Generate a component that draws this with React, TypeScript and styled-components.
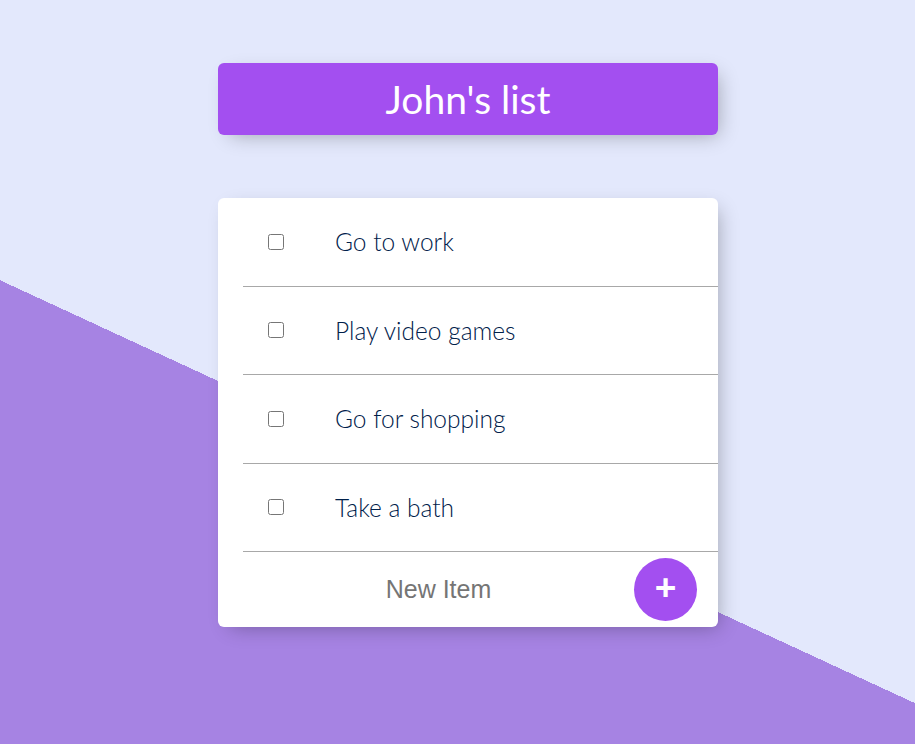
import React from "react";
import styled, { createGlobalStyle } from "styled-components";

const Global = createGlobalStyle`
  html, body { margin: 0; padding: 0; }
  body { font-family: "Lato", "Liberation Sans", sans-serif; }
`;

const Page = styled.div`
  min-height: 744px;
  box-sizing: border-box;
  padding-top: 63px;
  padding-left: 21px;
  display: flex;
  flex-direction: column;
  align-items: center;
  gap: 63px;
  background-color: #e3e8fc;
  background-image: linear-gradient(24.81deg, #a683e3 421px, #e3e8fc 421px);
`;

const Box = styled.div`
  width: 500px;
  background: #ffffff;
  border-radius: 6px;
  box-shadow: 6px 6px 19px -6px rgba(0, 0, 0, 0.3);
`;

const HeadingBox = styled(Box)`
  background: #a34ff0;
`;

const Title = styled.h1`
  margin: 0;
  height: 72px;
  display: flex;
  align-items: center;
  justify-content: center;
  color: #ffffff;
  font-family: "Lato", sans-serif;
  font-weight: 400;
  font-size: 39px;
`;

const Item = styled.div`
  margin-left: 25px;
  height: 87.5px;
  display: flex;
  align-items: center;
  border-bottom: 1px solid #a8a8a8;
`;

const Check = styled.input`
  width: 16px;
  height: 16px;
  margin: 0 26px 0 25px;
  flex: none;
`;

const Label = styled.p`
  margin: 0;
  padding: 0 25px;
  font-family: "Lato", sans-serif;
  font-size: 24.5px;
  font-weight: 300;
  color: #00204a;
`;

const Form = styled.form`
  margin-left: 25px;
  padding-right: 21px;
  height: 75px;
  display: flex;
  align-items: center;
`;

const NewInput = styled.input`
  flex: 1;
  min-width: 0;
  height: 60px;
  border: none;
  outline: none;
  text-align: center;
  font-family: "Liberation Sans", Arial, sans-serif;
  font-size: 25px;
  color: #333;
  background: transparent;
  &::placeholder { color: #757575; }
`;

const AddButton = styled.button`
  width: 63px;
  height: 63px;
  flex: none;
  border: 0;
  border-radius: 50%;
  background: #a34ff0;
  color: #ffffff;
  font-family: "Liberation Sans", Arial, sans-serif;
  font-size: 37px;
  font-weight: 700;
  line-height: 1;
  padding: 0 0 5px;
  display: flex;
  align-items: center;
  justify-content: center;
  cursor: pointer;
`;

const items = ["Go to work", "Play video games", "Go for shopping", "Take a bath"];

export default function App() {
  return (
    <>
      <Global />
      <Page>
        <HeadingBox>
          <Title>John's list</Title>
        </HeadingBox>
        <Box>
          {items.map((t) => (
            <Item key={t}>
              <Check type="checkbox" />
              <Label>{t}</Label>
            </Item>
          ))}
          <Form onSubmit={(e) => e.preventDefault()}>
            <NewInput type="text" placeholder="New Item" />
            <AddButton type="submit">+</AddButton>
          </Form>
        </Box>
      </Page>
    </>
  );
}
